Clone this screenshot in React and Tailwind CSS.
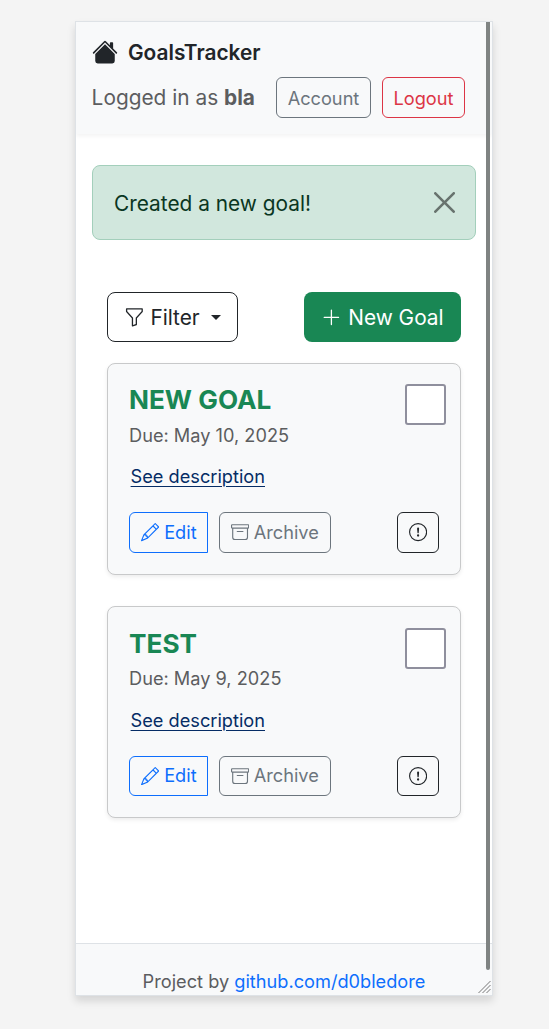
import React from "react";
import {
  BsArchive,
  BsExclamationCircle,
  BsFunnel,
  BsHouseFill,
  BsPencil,
  BsPlusLg,
} from "react-icons/bs";

const goals = [
  { title: "NEW GOAL", due: "May 10, 2025", padding: "pt-5", dueGap: "mt-[6px]", linkGap: "mt-[15px]", actions: "h-[41px]" },
  { title: "TEST", due: "May 9, 2025", padding: "pt-[21px]", dueGap: "mt-[5px]", linkGap: "mt-[15px]", actions: "h-[40px]" },
];

function GoalCard({ title, due, padding, dueGap, linkGap, actions }) {
  return (
    <article className={`flex h-[212px] flex-col rounded-lg border border-[#c8c9ca] bg-[#f8f9fa] pl-[21px] pr-[14px] shadow-[0_2px_4px_rgba(0,0,0,0.075)] ${padding}`}>
      <div className="flex h-[63px] justify-between">
        <div>
          <h2 className="h-[31px] text-[26.2px] leading-[31px] font-bold text-[#198754]">{title}</h2>
          <p className={`text-[18.2px] leading-7 text-[#5c5d5f] ${dueGap}`}>Due: {due}</p>
        </div>
        <input
          type="checkbox"
          aria-label={title}
          className="h-[41px] w-[41px] appearance-none rounded-[3px] border-2 border-[#8f8f9d] bg-white"
        />
      </div>
      <a className={`ml-[1.6px] self-start text-[18.2px] leading-7 text-[#052c65] underline decoration-1 underline-offset-[3px] ${linkGap}`}>
        See description
      </a>
      <div className={`mt-[22px] mr-[7px] flex shrink-0 text-[18.2px] ${actions}`}>
        <button className="flex w-[79px] items-center gap-[5px] rounded-l-[6px] border border-[#0d6efd] pl-[11px] text-[#0d6efd]">
          <BsPencil className="size-[18.2px] shrink-0" />
          Edit
        </button>
        <button className="ml-[11px] flex w-[112px] items-center gap-[5px] rounded-[6px] border border-[#6c757d] pl-[10.5px] text-[#6c757d]">
          <BsArchive className="size-[18.2px] shrink-0" />
          Archive
        </button>
        <button
          aria-label="Details"
          className="ml-auto flex w-[42px] items-center justify-center rounded-[6px] border border-[#212529] text-[#212529]"
        >
          <BsExclamationCircle className="size-[18.2px]" />
        </button>
      </div>
    </article>
  );
}

export default function App() {
  return (
    <div className="h-[1029px] bg-[#f4f4f4] pt-[21px] pl-[75px] font-['Inter',sans-serif] text-[20.85px] text-[#212529]">
      <div className="relative flex h-[975px] w-[418px] flex-col overflow-hidden border border-[#dee2e6] bg-white shadow-[0_5px_8px_rgba(0,0,0,0.13)]">
        <header className="relative h-[112px] shrink-0 bg-[#f8f9fa] pl-[15.6px] pt-[14px] shadow-[0_2px_4px_rgba(0,0,0,0.05)]">
          <div className="flex h-8 items-center gap-[10.4px] font-semibold">
            <BsHouseFill className="size-[26px]" />
            <span className="pt-px">GoalsTracker</span>
          </div>
          <div className="mt-[9px] flex h-[41px] items-center">
            <p className="w-[184.4px] text-[#5c5d5f]">
              Logged in as <b>bla</b>
            </p>
            <button className="h-[41px] w-[95px] rounded-[6px] border border-[#6c757d] pt-[2px] text-[18.2px] text-[#6c757d]">
              Account
            </button>
            <button className="ml-[11px] h-[41px] w-[83px] rounded-[6px] border border-[#dc3545] pt-[2px] text-[18.2px] text-[#dc3545]">
              Logout
            </button>
          </div>
        </header>

        <main className="flex-1">
          <div className="mt-[31px] ml-4 flex h-[75px] w-[384px] items-center justify-between rounded-lg border border-[#a3cfbb] bg-[#d1e7dd] pr-[20.5px] pl-[21px] text-[#0a3622]">
            <span className="pt-[2px]">Created a new goal!</span>
            <svg viewBox="0 0 16 16" className="size-[21px] text-[#68736e]" fill="currentColor" aria-label="Close">
              <path d="M.293.293a1 1 0 0 1 1.414 0L8 6.586 14.293.293a1 1 0 1 1 1.414 1.414L9.414 8l6.293 6.293a1 1 0 0 1-1.414 1.414L8 9.414l-6.293 6.293a1 1 0 0 1-1.414-1.414L6.586 8 .293 1.707a1 1 0 0 1 0-1.414z" />
            </svg>
          </div>

          <div className="mt-[52px] ml-[31px] w-[354px]">
            <div className="flex h-[50px] justify-between">
              <button className="flex w-[131px] items-center rounded-lg border border-[#212529] pl-[16px]">
                <BsFunnel className="mr-[5.6px] size-[20.8px] shrink-0" />
                <span className="pt-px">Filter</span>
                <span className="ml-[11px] border-x-[5px] border-t-[5px] border-x-transparent border-t-[#212529]" />
              </button>
              <button className="flex w-[157px] items-center rounded-lg bg-[#198754] pl-[17.4px] text-white">
                <BsPlusLg className="mr-[6px] size-[20.8px] shrink-0" />
                <span className="pt-px">New Goal</span>
              </button>
            </div>
            <div className="mt-[21px] flex flex-col gap-[31px]">
              {goals.map((goal) => (
                <GoalCard key={goal.title} {...goal} />
              ))}
            </div>
          </div>
        </main>

        <footer className="h-[52px] shrink-0 border-t border-[#dee2e6] bg-[#f8f9fa] pt-[23px] text-center text-[18.2px] leading-7 text-[#5c5d5f]">
          Project by <a className="text-[#0d6efd]">github.com/d0bledore</a>
        </footer>

        <div className="absolute top-0 right-[2px] h-[948px] w-1 rounded-b-sm bg-[#7f8382]" />
        <svg className="absolute right-[1px] bottom-[2px] h-3 w-[13px] text-[#777]" viewBox="0 0 13 12" fill="none" stroke="currentColor">
          <path d="M.5 12 12.5 0M4.5 12l8-8M8.500 12l4-4" />
        </svg>
      </div>
    </div>
  );
}
